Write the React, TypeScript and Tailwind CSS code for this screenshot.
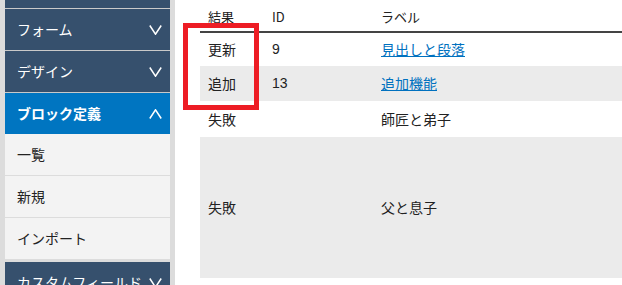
import { ReactNode } from 'react'

const font = { fontFamily: '"Noto Sans CJK JP", "Noto Sans", sans-serif' }

function Chevron({ up = false }: { up?: boolean }) {
  return (
    <svg width="13" height="10" viewBox="0 0 13 10" className="shrink-0">
      <polyline
        points={up ? '0.8,9.5 6.5,0.8 12.2,9.5' : '0.8,0.5 6.5,9.2 12.2,0.5'}
        fill="none"
        stroke="white"
        strokeWidth="1.5"
      />
    </svg>
  )
}

function DarkItem({ label, active = false }: { label: string; active?: boolean }) {
  return (
    <div
      className={`flex h-[41px] shrink-0 items-center justify-between pl-3 pr-2 text-[14px] text-white ${
        active ? 'bg-[#0075c1] font-bold' : 'bg-[#36506d]'
      }`}
    >
      <span className="whitespace-nowrap">{label}</span>
      <Chevron up={active} />
    </div>
  )
}

function SubItem({ children }: { children: ReactNode }) {
  return (
    <div className="flex h-[41px] shrink-0 items-center bg-[#f3f3f3] pl-3 text-[14px] text-[#222]">
      {children}
    </div>
  )
}

const rows = [
  { result: '更新', id: '9', label: '見出しと段落', link: true, h: 'h-[34px]', bg: 'bg-white' },
  { result: '追加', id: '13', label: '追加機能', link: true, h: 'h-[35px]', bg: 'bg-[#ebebeb]' },
  { result: '失敗', id: '', label: '師匠と弟子', link: false, h: 'h-[36px]', bg: 'bg-white' },
  { result: '失敗', id: '', label: '父と息子', link: false, h: 'h-[141px]', bg: 'bg-[#ebebeb]' },
]

export default function App() {
  return (
    <div className="flex h-[285px] w-[622px] overflow-hidden bg-white" style={font}>
      {/* sidebar */}
      <aside className="flex w-[175px] shrink-0 flex-col bg-[#dcdcdc] pl-[5px] pr-[5px]">
        <div className="h-[8px] shrink-0 bg-[#36506d]" />
        <div className="h-px shrink-0 bg-[#c9c9c9]" />
        <DarkItem label="フォーム" />
        <div className="h-px shrink-0 bg-[#c9c9c9]" />
        <DarkItem label="デザイン" />
        <div className="h-px shrink-0 bg-[#c9c9c9]" />
        <DarkItem label="ブロック定義" active />
        <SubItem>一覧</SubItem>
        <div className="h-px shrink-0 bg-[#dcdcdc]" />
        <SubItem>新規</SubItem>
        <div className="h-px shrink-0 bg-[#dcdcdc]" />
        <SubItem>インポート</SubItem>
        <div className="h-[3px] shrink-0" />
        <DarkItem label="カスタムフィールド" />
      </aside>

      {/* main */}
      <main className="relative flex-1 pl-[25px]">
        <table className="w-full table-fixed border-collapse text-[14px] text-[#222]">
          <colgroup>
            <col className="w-[64px]" />
            <col className="w-[109px]" />
            <col />
          </colgroup>
          <thead>
            <tr className="h-[32px] border-b-2 border-[#444] text-[13px]">
              <th className="px-2 pt-[3px] text-left font-normal">結果</th>
              <th className="px-2 pt-[3px] text-left font-normal">ID</th>
              <th className="px-2 pt-[3px] text-left font-normal">ラベル</th>
            </tr>
          </thead>
          <tbody>
            {rows.map((r, i) => (
              <tr key={i} className={`${r.h} ${r.bg}`}>
                <td className="px-2">{r.result}</td>
                <td className="px-2" style={{ fontFamily: '"Liberation Sans", sans-serif' }}>
                  {r.id}
                </td>
                <td className="px-2">
                  {r.link ? (
                    <a href="#" className="text-[#0071bf] underline">
                      {r.label}
                    </a>
                  ) : (
                    r.label
                  )}
                </td>
              </tr>
            ))}
          </tbody>
        </table>

        {/* highlight annotation */}
        <div className="pointer-events-none absolute left-[8px] top-[23px] h-[87px] w-[76px] border-[5px] border-[#ed1c24]" />
      </main>
    </div>
  )
}
